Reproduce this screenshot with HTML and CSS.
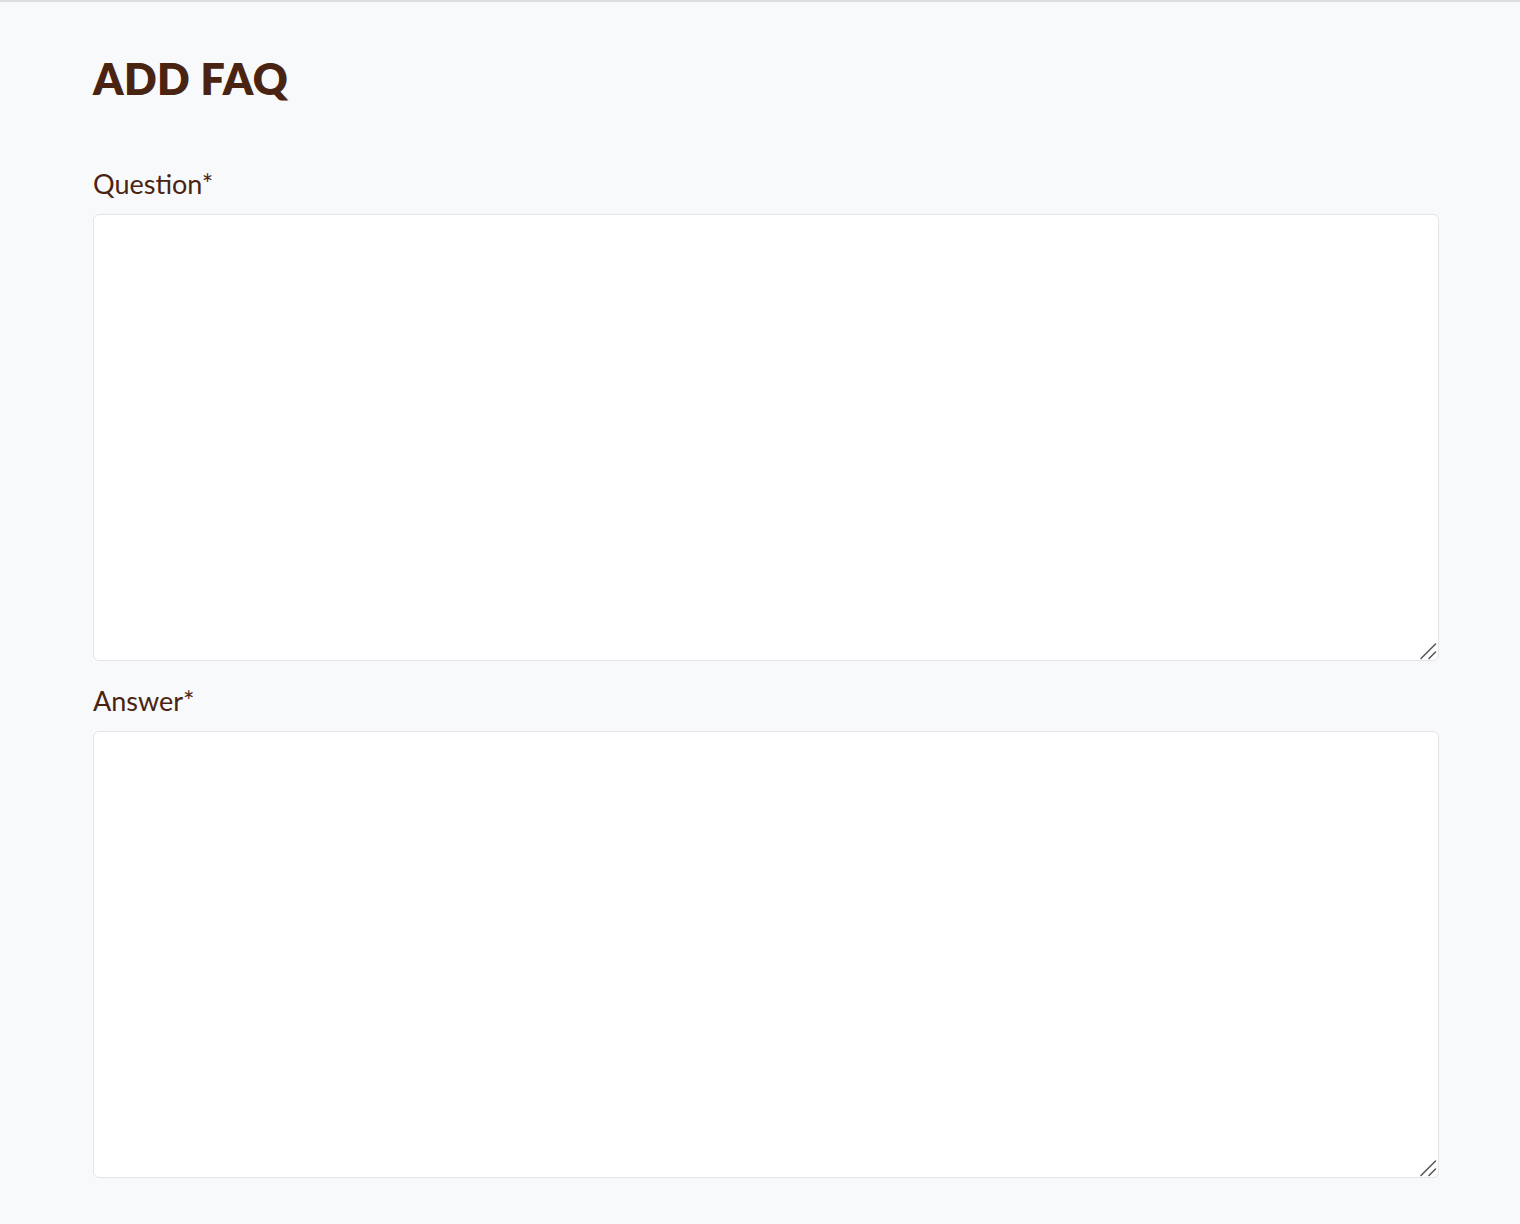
FILE: index.html
```html
<!DOCTYPE html>
<html lang="en">
<head>
<meta charset="utf-8">
<title>Add FAQ</title>
<link rel="stylesheet" href="styles.css">
</head>
<body>
<main class="page">
  <h1 class="title">ADD FAQ</h1>
  <form class="form">
    <div class="field">
      <label class="label" for="q">Question*</label>
      <div class="box">
        <textarea id="q" class="input"></textarea>
        <svg class="grip" width="18" height="18" viewBox="0 0 18 18" aria-hidden="true">
          <path d="M2 16.5 L16.5 2 M10 16.5 L16.5 10" stroke="#5a5a5a" stroke-width="1.6" stroke-linecap="round" fill="none"/>
        </svg>
      </div>
    </div>
    <div class="field">
      <label class="label" for="a">Answer*</label>
      <div class="box">
        <textarea id="a" class="input"></textarea>
        <svg class="grip" width="18" height="18" viewBox="0 0 18 18" aria-hidden="true">
          <path d="M2 16.5 L16.5 2 M10 16.5 L16.5 10" stroke="#5a5a5a" stroke-width="1.6" stroke-linecap="round" fill="none"/>
        </svg>
      </div>
    </div>
  </form>
</main>
</body>
</html>
```

FILE: styles.css
```css
html, body {
  margin: 0;
  padding: 0;
}
body {
  background: #f8f9fb;
  border-top: 2px solid #dcdde1;
  font-family: Lato, "Open Sans", sans-serif;
  color: #4a2412;
  min-height: 1222px;
}
.page {
  padding: 49px 81px 40px 93px;
}
.title {
  margin: 0;
  font-size: 43px;
  line-height: 56px;
  font-weight: 800;
  letter-spacing: 0.4px;
}
.form {
  margin-top: 61px;
  display: flex;
  flex-direction: column;
  gap: 24px;
}
.field {
  display: flex;
  flex-direction: column;
  gap: 14px;
}
.label {
  font-size: 27px;
  line-height: 32px;
  font-weight: 400;
}
.box {
  position: relative;
}
.input {
  display: block;
  box-sizing: border-box;
  width: 100%;
  height: 447px;
  margin: 0;
  background: #fff;
  border: 1px solid #e3e4e8;
  border-radius: 6px;
  resize: none;
  font-family: inherit;
  font-size: 18px;
  padding: 10px;
}
.grip {
  position: absolute;
  right: 2px;
  bottom: 1px;
  pointer-events: none;
}
```
